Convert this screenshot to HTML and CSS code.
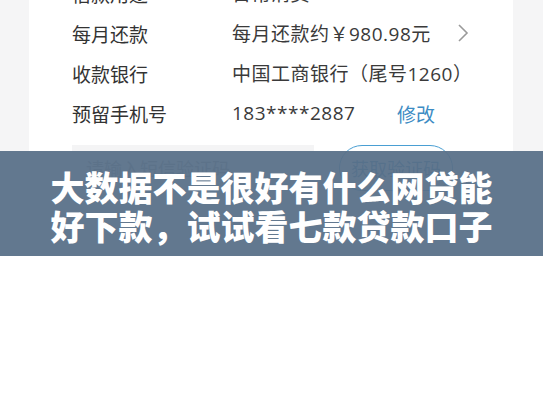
FILE: index.html
```html
<!DOCTYPE html>
<html lang="zh">
<head>
<meta charset="utf-8">
<link rel="stylesheet" href="styles.css">
</head>
<body>
<div class="page">
  <div class="card">
    <div class="row"><span class="label">借款用途</span><span class="value">日常消费</span></div>
    <div class="row"><span class="label">每月还款</span><span class="value">每月还款约￥980.98元</span>
      <svg class="chev" width="12" height="20" viewBox="0 0 12 20"><polyline points="2,2 10,10 2,18" fill="none" stroke="#9a9a9a" stroke-width="1.6"/></svg>
    </div>
    <div class="row"><span class="label">收款银行</span><span class="value">中国工商银行（尾号1260）</span></div>
    <div class="row"><span class="label">预留手机号</span><span class="value num">183****2887</span><span class="link">修改</span></div>
    <div class="code-row">
      <div class="input">请输入短信验证码</div>
      <div class="btn">获取验证码</div>
    </div>
  </div>
  <div class="overlay">
    <div class="title">大数据不是很好有什么网贷能<br>好下款，试试看七款贷款口子</div>
  </div>
</div>
</body>
</html>
```
FILE: styles.css
```css
html, body {
  margin: 0;
  padding: 0;
  background: #ffffff;
}
.page {
  position: relative;
  width: 543px;
  height: 408px;
  overflow: hidden;
  background: linear-gradient(#f5f5f6 0, #f5f5f6 256px, #ffffff 256px);
  font-family: "Noto Sans CJK SC", "Noto Sans", sans-serif;
}
.card {
  margin: -27px 0 0 29px;
  width: 484px;
  height: 248px;
  background: #ffffff;
  box-sizing: border-box;
  padding-left: 43px;
}
.row {
  height: 40px;
  display: flex;
  align-items: center;
  font-size: 19px;
  color: #333333;
}
.label {
  width: 160px;
  flex: none;
}
.value {
  flex: none;
  font-family: "Open Sans", "Noto Sans CJK SC", sans-serif;
  color: #3a3a3a;
  letter-spacing: 0.5px;
}
.num {
  width: 165px;
}
.chev {
  margin-left: 26px;
}
.link {
  color: #3d8cc4;
}
.code-row {
  margin-top: 12px;
  display: flex;
  align-items: center;
}
.input {
  width: 242px;
  height: 46px;
  background: #f4f4f5;
  box-sizing: border-box;
  padding: 0 14px;
  display: flex;
  align-items: center;
  font-size: 18px;
  color: #999;
}
.btn {
  margin-left: 25px;
  width: 114px;
  height: 46px;
  box-sizing: border-box;
  border: 1.5px solid #4a9fd3;
  border-radius: 23px;
  display: flex;
  align-items: center;
  justify-content: center;
  font-size: 18px;
  color: #3a86ba;
}
.overlay {
  position: absolute;
  left: 0;
  top: 151px;
  width: 543px;
  height: 105px;
  background: rgba(88, 112, 136, 0.94);
  display: flex;
  align-items: center;
  justify-content: center;
}
.title {
  color: #ffffff;
  font-size: 34px;
  font-weight: 900;
  line-height: 39px;
  text-align: center;
  padding-top: 4px;
}
```
